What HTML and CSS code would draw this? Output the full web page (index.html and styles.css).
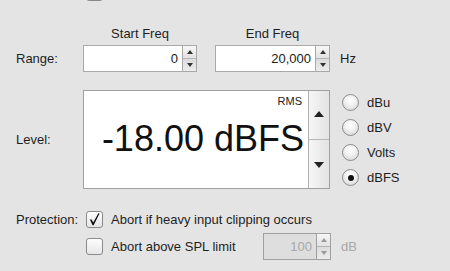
FILE: index.html
```html
<!DOCTYPE html>
<html>
<head>
<meta charset="utf-8">
<link rel="stylesheet" href="styles.css">
</head>
<body>
<div class="panel">
  <div class="row top-row">
    <div class="label"></div>
    <span class="checkbox"></span>
    <span class="cb-text">Apply input gain</span>
  </div>

  <div class="row head-row">
    <div class="label"></div>
    <div class="head start">Start Freq</div>
    <div class="head end">End Freq</div>
  </div>

  <div class="row range-row">
    <div class="label">Range:</div>
    <div class="spin w-start">
      <div class="spin-field">0</div>
      <div class="spin-btns">
        <span class="sb up"><i class="tri-up"></i></span>
        <span class="sb down"><i class="tri-down"></i></span>
      </div>
    </div>
    <div class="spin w-end">
      <div class="spin-field">20,000</div>
      <div class="spin-btns">
        <span class="sb up"><i class="tri-up"></i></span>
        <span class="sb down"><i class="tri-down"></i></span>
      </div>
    </div>
    <span class="unit">Hz</span>
  </div>

  <div class="row level-row">
    <div class="label">Level:</div>
    <div class="level-box">
      <div class="display">
        <span class="rms">RMS</span>
        <span class="big">-18.00 dBFS</span>
      </div>
      <div class="scroll">
        <span class="scroll-btn"><i class="arrow-up"></i></span>
        <span class="scroll-btn"><i class="arrow-down"></i></span>
      </div>
    </div>
    <div class="radios">
      <div class="radio-item"><span class="radio"></span><span>dBu</span></div>
      <div class="radio-item"><span class="radio"></span><span>dBV</span></div>
      <div class="radio-item"><span class="radio"></span><span>Volts</span></div>
      <div class="radio-item"><span class="radio checked"></span><span>dBFS</span></div>
    </div>
  </div>

  <div class="row prot-row">
    <div class="label">Protection:</div>
    <span class="checkbox">
      <svg width="15" height="15" viewBox="0 0 15 15"><path d="M2.8 7.6 L4.6 7.4 L6.2 10.6 L11.4 1.2 L12.6 1.6 L6.6 13.2 L5.6 13.2 Z" fill="#111"/></svg>
    </span>
    <span class="cb-text">Abort if heavy input clipping occurs</span>
  </div>

  <div class="row spl-row">
    <div class="label"></div>
    <span class="checkbox"></span>
    <span class="cb-text spl-text">Abort above SPL limit</span>
    <div class="spin w-spl disabled">
      <div class="spin-field">100</div>
      <div class="spin-btns">
        <span class="sb up"><i class="tri-up"></i></span>
        <span class="sb down"><i class="tri-down"></i></span>
      </div>
    </div>
    <span class="unit disabled-text">dB</span>
  </div>
</div>
</body>
</html>
```

FILE: styles.css
```css
html, body {
  margin: 0;
  padding: 0;
  background: #e4e4e4;
  overflow: hidden;
}
body {
  width: 450px;
  height: 271px;
  font-family: "Liberation Sans", Arial, sans-serif;
  font-size: 13px;
  color: #1e1e1e;
}
.panel {
  padding-left: 16px;
  display: flex;
  flex-direction: column;
}
.row {
  display: flex;
  align-items: center;
}
.label {
  width: 67px;
  flex: none;
}
.top-row {
  margin-top: -16px;
  height: 17px;
}
.top-row .cb-text {
  margin-top: -1px;
}
.head-row {
  margin-top: 24px;
  height: 16px;
}
.head {
  text-align: center;
}
.head.start { width: 114px; }
.head.end { width: 115px; margin-left: 18px; }

.range-row {
  margin-top: 4px;
  height: 27px;
}
.spin {
  display: flex;
  height: 27px;
  box-sizing: border-box;
}
.w-start { width: 114px; }
.w-end { width: 115px; margin-left: 18px; }
.spin-field {
  flex: 1;
  background: #fff;
  border: 1px solid #a9a9a9;
  border-right: none;
  text-align: right;
  padding-right: 4px;
  line-height: 25px;
  color: #1a1a1a;
}
.spin-btns {
  width: 15px;
  display: flex;
  flex-direction: column;
  border: 1px solid #a9a9a9;
  box-sizing: border-box;
}
.sb {
  flex: 1;
  display: flex;
  align-items: center;
  justify-content: center;
  background: linear-gradient(#f7f7f7, #e2e2e2);
}
.sb.down {
  border-top: 1px solid #b5b5b5;
  background: linear-gradient(#dcdcdc, #ececec);
}
.tri-up, .tri-down {
  display: block;
  width: 0;
  height: 0;
  border-left: 3.5px solid transparent;
  border-right: 3.5px solid transparent;
}
.tri-up { border-bottom: 4px solid #333; }
.tri-down { border-top: 4px solid #333; }
.unit {
  margin-left: 10px;
}

.level-row {
  margin-top: 18px;
  height: 99px;
  align-items: center;
}
.level-box {
  width: 247px;
  height: 99px;
  box-sizing: border-box;
  border: 1px solid #a0a0a0;
  display: flex;
  background: #fff;
}
.display {
  flex: 1;
  position: relative;
  display: flex;
  align-items: center;
  justify-content: flex-end;
  padding-right: 4px;
}
.rms {
  position: absolute;
  top: 4px;
  right: 6px;
  font-size: 11px;
  color: #222;
}
.big {
  font-size: 36px;
  color: #111;
  margin-top: -2px;
}
.scroll {
  width: 20px;
  display: flex;
  flex-direction: column;
  border-left: 1px solid #b0b0b0;
}
.scroll-btn {
  flex: 1;
  display: flex;
  align-items: center;
  justify-content: center;
  background: linear-gradient(90deg, #f6f6f6, #e3e3e3);
}
.scroll-btn + .scroll-btn {
  border-top: 1px solid #b8b8b8;
}
.arrow-up, .arrow-down {
  display: block;
  width: 0;
  height: 0;
  border-left: 5px solid transparent;
  border-right: 5px solid transparent;
}
.arrow-up { border-bottom: 6px solid #222; margin-top: -2px; }
.arrow-down { border-top: 6px solid #222; margin-top: 2px; }

.radios {
  margin-left: 12px;
  display: flex;
  flex-direction: column;
  gap: 8px;
  margin-top: 1px;
}
.radio-item {
  display: flex;
  align-items: center;
  height: 17px;
}
.radio {
  width: 17px;
  height: 17px;
  box-sizing: border-box;
  border-radius: 50%;
  border: 1px solid #8d8d8d;
  background: radial-gradient(circle at 50% 35%, #ffffff 0%, #f2f2f2 40%, #cfcfcf 100%);
  margin-right: 8px;
  display: flex;
  align-items: center;
  justify-content: center;
}
.radio.checked::after {
  content: "";
  width: 6px;
  height: 6px;
  border-radius: 50%;
  background: #111;
}

.prot-row {
  margin-top: 22px;
  height: 17px;
}
.checkbox {
  width: 17px;
  height: 17px;
  box-sizing: border-box;
  border: 1px solid #8a8a8a;
  border-radius: 3px;
  background: linear-gradient(#fdfdfd, #e6e6e6);
  margin-left: 3px;
  margin-right: 8px;
  display: flex;
  align-items: center;
  justify-content: center;
  flex: none;
}
.checkbox svg { display: block; margin-top: -1px; }
.spl-row {
  margin-top: 5px;
  height: 27px;
}
.spl-text {
  width: 152px;
}
.w-spl { width: 68px; }
.disabled .spin-field {
  background: #dedede;
  color: #a8a8a8;
  border-color: #a0a0a0;
}
.disabled .spin-btns { border-color: #a0a0a0; }
.disabled .tri-up { border-bottom-color: #9a9a9a; }
.disabled .tri-down { border-top-color: #9a9a9a; }
.disabled-text { color: #a8a8a8; }
```
